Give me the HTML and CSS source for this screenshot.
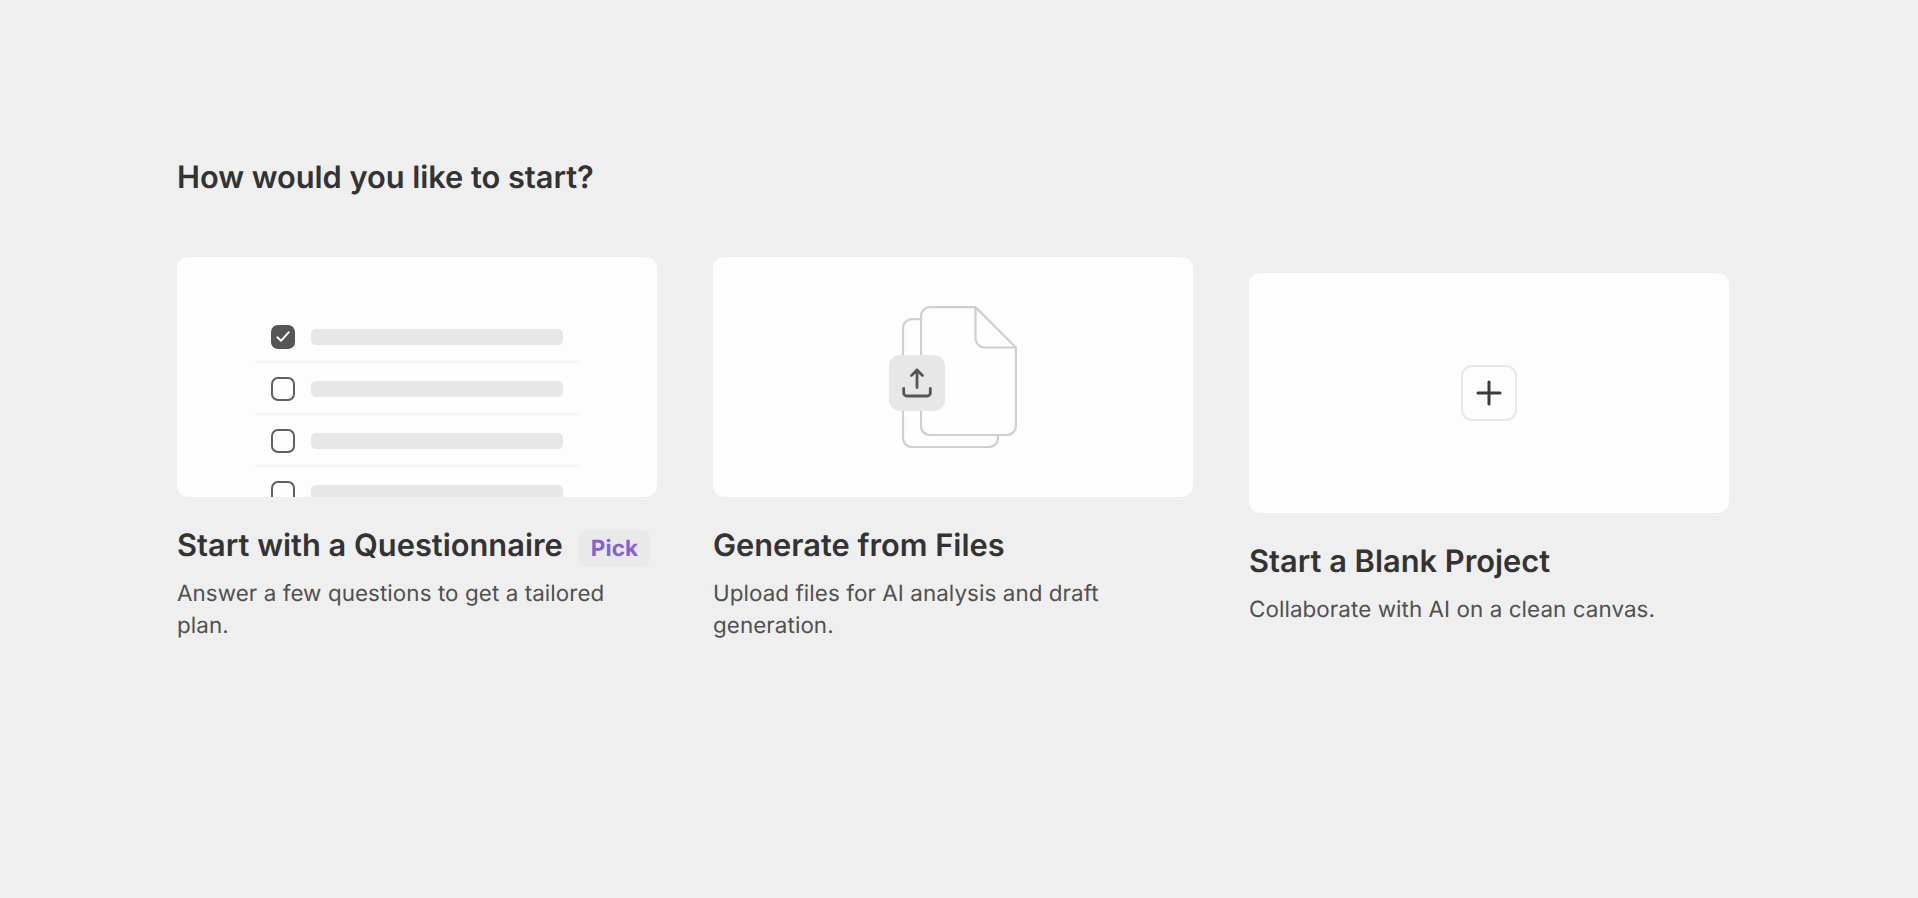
FILE: index.html
```html
<!DOCTYPE html>
<html lang="en">
<head>
<meta charset="utf-8">
<title>How would you like to start?</title>
<link rel="stylesheet" href="styles.css">
</head>
<body>
<main class="page">
  <h1 class="heading">How would you like to start?</h1>
  <div class="options">
    <section class="option">
      <div class="preview preview-list">
        <ul class="checklist">
          <li class="row"><span class="box box-on"><svg viewBox="0 0 24 24" width="24" height="24"><path d="M6.300 12.300l3.700 3.500 7.800-8.600" fill="none" stroke="#fff" stroke-width="1.900" stroke-linecap="round" stroke-linejoin="round"/></svg></span><span class="bar"></span></li>
          <li class="row"><span class="box"></span><span class="bar"></span></li>
          <li class="row"><span class="box"></span><span class="bar"></span></li>
          <li class="row"><span class="box"></span><span class="bar"></span></li>
        </ul>
      </div>
      <div class="title-row"><h2 class="title">Start with a Questionnaire</h2><span class="pick">Pick</span></div>
      <p class="desc">Answer a few questions to get a tailored plan.</p>
    </section>
    <section class="option">
      <div class="preview preview-center">
        <div class="files">
          <svg class="page-back" viewBox="0 0 97 130" width="97" height="130">
            <path d="M19 1.100H10a9 9 0 0 0-9 9V120a9 9 0 0 0 9 9h77a9 9 0 0 0 9-9v-4" fill="none" stroke="#cfcfcf" stroke-width="2.200"/>
          </svg>
          <svg class="page-front" viewBox="0 0 97 130" width="97" height="130">
            <path d="M10 1.100h45.500l40.400 40.400V120a9 9 0 0 1-9 9H10a9 9 0 0 1-9-9V10a9 9 0 0 1 9-8.900z" fill="#fdfdfd" stroke="#cfcfcf" stroke-width="2.200" stroke-linejoin="round"/>
            <path d="M55.500 1.100V32.500a9 9 0 0 0 9 9h31.400" fill="none" stroke="#cfcfcf" stroke-width="2.200"/>
          </svg>
          <div class="upload">
            <svg viewBox="0 0 32 32" width="32" height="32"><path d="M16 20.500V3M10.500 8.500L16 3l5.500 5.500M2.700 21.500V26a3 3 0 0 0 3 3h20.600a3 3 0 0 0 3-3v-4.500" fill="none" stroke="#555" stroke-width="2.800" stroke-linecap="round" stroke-linejoin="round"/></svg>
          </div>
        </div>
      </div>
      <div class="title-row"><h2 class="title">Generate from Files</h2></div>
      <p class="desc">Upload files for AI analysis and draft generation.</p>
    </section>
    <section class="option option-low">
      <div class="preview preview-center">
        <div class="plus">
          <svg viewBox="0 0 28 28" width="28" height="28"><path d="M14 3v22M3 14h22" fill="none" stroke="#3a3a3a" stroke-width="3" stroke-linecap="round"/></svg>
        </div>
      </div>
      <div class="title-row"><h2 class="title">Start a Blank Project</h2></div>
      <p class="desc">Collaborate with AI on a clean canvas.</p>
    </section>
  </div>
</main>
</body>
</html>
```
FILE: styles.css
```css
* { box-sizing: border-box; }
html, body { margin: 0; height: 100%; }
body {
  background: #efefef;
  font-family: Inter, "Liberation Sans", sans-serif;
  color: #333;
  overflow: hidden;
  text-rendering: geometricPrecision;
}
.page { padding: 158px 189px 0 177px; }
.heading {
  margin: 0 0 59px;
  font-size: 30.800px;
  letter-spacing: -0.040px;
  line-height: 40px;
  font-weight: 600;
  color: #333;
}
.options { display: flex; gap: 56px; align-items: flex-start; }
.option { width: 480px; flex: none; }
.option-low { margin-top: 16px; }
.preview {
  height: 240px;
  background: #fdfdfd;
  border-radius: 11.200px;
  overflow: hidden;
}
.preview-list { padding: 56px 78px 0 78px; }
.preview-center { display: flex; align-items: center; justify-content: center; }
.checklist { list-style: none; margin: 0; padding: 0; }
.row {
  display: flex;
  align-items: center;
  gap: 16px;
  height: 50px;
  margin-bottom: 2px;
  padding: 0 16px;
  border-bottom: 2px solid #f4f4f4;
}
.box {
  width: 24px;
  height: 24px;
  flex: none;
  border: 2px solid #606060;
  border-radius: 7px;
  background: #fdfdfd;
}
.box-on { background: #555; border: 0; display: block; }
.box-on svg { display: block; }
.bar { width: 252px; height: 16px; background: #e7e7e7; border-radius: 5px; }
.title-row { display: flex; align-items: center; gap: 16px; margin-top: 29px; height: 40px; }
.title { margin: 0; font-size: 30.800px; line-height: 40px; font-weight: 600; color: #333; white-space: nowrap; }
.pick {
  height: 37px;
  margin-top: 4px;
  padding: 0 12px;
  border-radius: 8.400px;
  background: #e9e9e9;
  color: #8561dd;
  font-size: 22.400px;
  letter-spacing: 0.200px;
  line-height: 37px;
  font-weight: 700;
}
.desc { margin: 12px 0 0; font-size: 22.400px; letter-spacing: 0.070px; line-height: 32px; color: #505050; }
.files { position: relative; width: 128px; height: 142px; }
.page-back { position: absolute; left: 13px; top: 12px; }
.page-front { position: absolute; left: 31px; top: 0; }
.upload {
  position: absolute;
  left: 0;
  top: 49px;
  width: 56px;
  height: 56px;
  display: flex;
  align-items: center;
  justify-content: center;
  background: #e7e7e7;
  border-radius: 11.200px;
}
.plus {
  width: 56px;
  height: 56px;
  display: flex;
  align-items: center;
  justify-content: center;
  background: #fdfdfd;
  border: 2px solid #e8e8e8;
  border-radius: 11.200px;
}
```
